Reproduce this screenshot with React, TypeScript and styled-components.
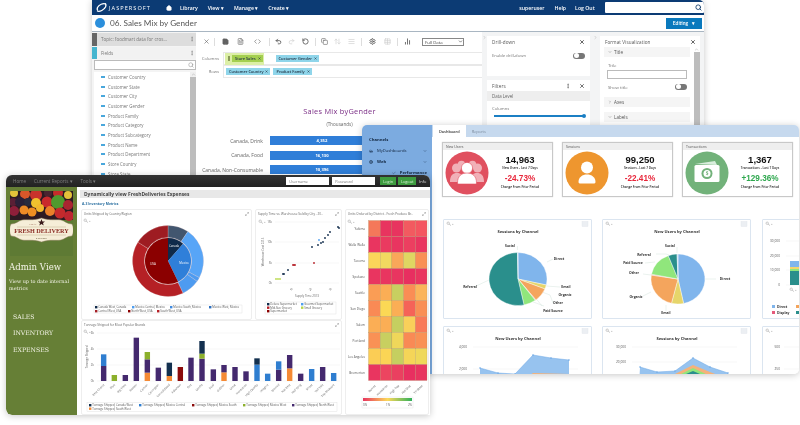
import React from 'react';
import styled, { createGlobalStyle } from 'styled-components';
import {
  X, Save, FileText, Code, Undo2, Redo2, RotateCcw, Copy, ArrowUpDown, AlignJustify,
  Settings, Table, BarChart2, Search, MoreVertical, ChevronRight, ChevronDown,
  Home, Maximize2, Globe, Car, ChevronUp, Check,
} from 'lucide-react';

const Global = createGlobalStyle`
  html, body { margin: 0; padding: 0; background: #fff; }
  body { width: 800px; height: 425px; overflow: hidden; font-family: "Open Sans", "Liberation Sans", sans-serif; }
`;

const Stage = styled.div`
  position: relative;
  width: 800px;
  height: 425px;
  overflow: hidden;
  background: #fff;
  filter: blur(0.3px);
`;

const Win = styled.div<{ $x: number; $y: number; $w: number; $h: number; $z: number; $r: string }>`
  position: absolute;
  left: ${(p) => p.$x}px;
  top: ${(p) => p.$y}px;
  width: ${(p) => p.$w}px;
  height: ${(p) => p.$h}px;
  z-index: ${(p) => p.$z};
  border-radius: ${(p) => p.$r};
  overflow: hidden;
  background: #fff;
  box-shadow: 0 1px 7px rgba(0, 0, 0, 0.22);
  display: flex;
  flex-direction: column;
`;

/* ---------- Jaspersoft window ---------- */
const TopNav = styled.div`
  height: 15px;
  flex: none;
  background: #0c3b74;
  display: flex;
  align-items: center;
  padding-left: 3px;
  color: #fff;
  font-size: 5.2px;
  font-weight: 600;
`;
const LogoText = styled.span`
  font-size: 5.6px;
  font-weight: 400;
  letter-spacing: 1.05px;
  margin: 0 15px 0 1px;
`;
const NavLink = styled.span<{ $gap?: number }>`
  margin-left: ${(p) => p.$gap ?? 0}px;
  white-space: nowrap;
`;
const NavSearch = styled.div`
  margin-left: 10px;
  width: 99px;
  height: 11px;
  background: #fff;
  border-radius: 1px;
  display: flex;
  align-items: center;
  justify-content: flex-end;
  padding-right: 2px;
  box-sizing: border-box;
  color: #17406f;
`;
const TitleBar = styled.div`
  height: 16px;
  flex: none;
  display: flex;
  align-items: center;
  padding-left: 3px;
  border-bottom: 1px solid #a9b6c2;
  color: #555;
  font-size: 8.2px;
  font-family: "Lato", sans-serif;
`;
const TitleBadge = styled.span`
  width: 10px;
  height: 10px;
  border-radius: 50%;
  background: #2b8fdc;
  margin-right: 5px;
  flex: none;
`;
const EditingBtn = styled.span`
  margin-left: auto;
  margin-right: 2px;
  width: 36px;
  height: 11px;
  background: #0a79bd;
  color: #fff;
  font-size: 5px;
  font-weight: 600;
  display: flex;
  align-items: center;
  justify-content: center;
  gap: 4px;
`;
const WorkArea = styled.div`
  flex: 1;
  display: flex;
  min-height: 0;
`;
const LeftPane = styled.div`
  width: 104px;
  flex: none;
  background: #f4f4f4;
  padding-top: 1px;
`;
const PaneHead = styled.div<{ $bg: string; $tab: string }>`
  height: 12.5px;
  background: ${(p) => p.$bg};
  border-left: 5px solid ${(p) => p.$tab};
  display: flex;
  align-items: center;
  justify-content: space-between;
  padding: 0 1px 0 4px;
  font-size: 4.6px;
  color: #777;
  margin-bottom: 1px;
`;
const FieldSearch = styled.div`
  height: 10px;
  margin: 1px 0 2px 2px;
  background: #fff;
  border: 1px solid #bbb;
  box-sizing: border-box;
  display: flex;
  align-items: center;
  justify-content: flex-end;
  padding-right: 1px;
  color: #888;
`;
const FieldArea = styled.div`
  display: flex;
  height: 130px;
  background: #fff;
  margin-left: 2px;
`;
const FieldList = styled.div`
  flex: 1;
  padding: 0 0 0 7px;
`;
const FieldRow = styled.div`
  height: 9.7px;
  display: flex;
  align-items: center;
  gap: 3px;
  font-size: 4.4px;
  color: #777;
  white-space: nowrap;
`;
const FieldIcon = styled.span`
  width: 4px;
  height: 2px;
  background: #49a7dc;
`;
const ScrollTrack = styled.div`
  width: 6px;
  background: #f0f0f0;
  color: #999;
  display: flex;
  flex-direction: column;
  align-items: center;
`;
const ScrollThumb = styled.div`
  width: 6px;
  flex: 1;
  background: #bdbdbd;
`;
const MainPane = styled.div`
  width: 286px;
  flex: none;
  background: #fff;
  padding: 1px 0 0 5px;
  box-sizing: border-box;
`;
const Toolbar = styled.div`
  height: 17px;
  display: flex;
  align-items: center;
  color: #666;
  margin-bottom: 3px;
`;
const ToolIcon = styled.span<{ $w: number; $faint?: boolean }>`
  width: ${(p) => p.$w}px;
  display: flex;
  align-items: center;
  justify-content: center;
  color: ${(p) => (p.$faint ? '#c9c9c9' : '#5f5f5f')};
`;
const ToolSep = styled.span`
  width: 1px;
  height: 8px;
  background: #ddd;
  margin: 0 3px;
`;
const DataSelect = styled.span`
  margin-left: 9px;
  width: 38px;
  height: 6px;
  border: 1px solid #888;
  font-size: 4.3px;
  line-height: 6px;
  padding-left: 2px;
  display: flex;
  justify-content: space-between;
  align-items: center;
  color: #444;
`;
const ShelfRow = styled.div`
  display: flex;
  align-items: center;
  height: 11px;
  margin-bottom: 2px;
`;
const ShelfLabel = styled.span`
  width: 22px;
  padding-right: 4px;
  box-sizing: border-box;
  text-align: right;
  font-size: 4.2px;
  color: #777;
  flex: none;
`;
const ShelfBox = styled.div`
  flex: 1;
  height: 11px;
  border: 1px solid #e8e8e8;
  border-right: none;
  display: flex;
  align-items: center;
  gap: 3px;
  padding-left: 2px;
`;
const DropZone = styled.span`
  background: #dcefa6;
  height: 12px;
  display: flex;
  align-items: center;
  gap: 2px;
  padding: 0 1px 0 3px;
  margin: 0 9px 0 -1px;
`;
const Handle = styled.span`
  width: 2px;
  height: 5px;
  background: #8a9a5a;
`;
const Pill = styled.span<{ $bg: string }>`
  background: ${(p) => p.$bg};
  height: 7px;
  padding: 0 2px 0 3px;
  font-size: 3.9px;
  color: #234;
  display: flex;
  align-items: center;
  gap: 2px;
  white-space: nowrap;
  font-weight: 600;
`;
const ChartTitle = styled.div`
  text-align: center;
  color: #7a2d85;
  font-size: 7.4px;
  letter-spacing: 0.25px;
  margin-top: 29px;
  padding-right: 4px;
`;
const ChartSub = styled.div`
  text-align: center;
  color: #666;
  font-size: 4.6px;
  margin-top: 5px;
  padding-right: 4px;
`;
const BarList = styled.div`
  margin-top: 9px;
  display: flex;
  flex-direction: column;
  gap: 5.7px;
`;
const BarRow = styled.div`
  display: flex;
  align-items: center;
  height: 9px;
`;
const BarLabel = styled.span`
  width: 62px;
  text-align: right;
  font-size: 5px;
  color: #666;
  white-space: nowrap;
  flex: none;
`;
const BarFill = styled.span`
  margin-left: 7px;
  width: 104px;
  height: 9px;
  background: #2f7ed8;
  color: #fff;
  font-size: 4.2px;
  font-weight: 700;
  display: flex;
  align-items: center;
  justify-content: center;
`;
const Strip = styled.div<{ $w: number }>`
  width: ${(p) => p.$w}px;
  flex: none;
  background: #f3f4f5;
  color: #aaa;
  display: flex;
  justify-content: center;
  padding-top: 3px;
  box-sizing: border-box;
`;
const SideCol = styled.div<{ $w: number; $end?: number }>`
  width: ${(p) => p.$w}px;
  flex: none;
  background: #f3f4f5;
  padding: 4px ${(p) => p.$end ?? 0}px 0 0;
  display: flex;
  flex-direction: column;
  gap: 4px;
  box-sizing: border-box;
`;
const SideCard = styled.div<{ $h: number }>`
  background: #fff;
  height: ${(p) => p.$h}px;
  flex: none;
  overflow: hidden;
`;
const SideHead = styled.div<{ $end?: number }>`
  height: 11px;
  padding: 0 ${(p) => p.$end ?? 5}px 0 5px;
  display: flex;
  align-items: center;
  justify-content: space-between;
  font-size: 4.6px;
  color: #555;
  letter-spacing: 0.1px;
`;
const HeadTools = styled.span`
  display: flex;
  align-items: center;
  gap: 8px;
  color: #444;
`;
const SideLine = styled.div<{ $h?: number; $top?: number }>`
  height: ${(p) => p.$h ?? 11}px;
  margin-top: ${(p) => p.$top ?? 0}px;
  padding: 0 5px;
  display: flex;
  align-items: center;
  justify-content: space-between;
  font-size: 4.2px;
  color: #777;
`;
const GreyRow = styled.div`
  height: 10px;
  background: #eeeeee;
  padding-left: 5px;
  font-size: 4.4px;
  color: #666;
  display: flex;
  align-items: center;
  gap: 2px;
  margin-bottom: 5px;
`;
const Toggle = styled.span`
  width: 12px;
  height: 6px;
  border-radius: 3px;
  background: #777;
  position: relative;
  &::after {
    content: '';
    position: absolute;
    left: 0.5px;
    top: 0.5px;
    width: 5px;
    height: 5px;
    border-radius: 50%;
    background: #fff;
  }
`;
const Slider = styled.div`
  height: 2px;
  background: #1b7fc4;
  margin: 4px 5px 0 7px;
  position: relative;
  &::after {
    content: '';
    position: absolute;
    right: -1px;
    top: -1px;
    width: 4px;
    height: 4px;
    border-radius: 50%;
    background: #1b7fc4;
  }
`;
const FormatBody = styled.div`
  display: flex;
`;
const FormatList = styled.div`
  flex: 1;
  padding-left: 4px;
`;
const FormatRow = styled.div`
  height: 10px;
  background: #f5f5f5;
  font-size: 4.6px;
  color: #555;
  display: flex;
  align-items: center;
  gap: 2px;
  padding-left: 4px;
  margin: 0 3px 5px 0;
`;
const FormatLabel = styled.div`
  font-size: 4.3px;
  color: #777;
  padding-left: 4px;
  height: 7px;
`;
const FormatInput = styled.div`
  height: 9px;
  border: 1px solid #bbb;
  box-sizing: border-box;
  margin: 1px 6px 3px 3px;
`;
const FormatToggle = styled.div`
  display: flex;
  align-items: center;
  justify-content: space-between;
  font-size: 4.3px;
  color: #777;
  padding: 0 6px 0 4px;
  height: 9px;
  margin-bottom: 6px;
`;
const FormatScroll = styled.div`
  width: 7px;
  flex: none;
  display: flex;
  flex-direction: column;
  align-items: center;
  color: #999;
  height: 90px;
`;

/* ---------- Dashboard window ---------- */
const DashBody = styled.div`
  display: flex;
  flex: 1;
  min-height: 0;
`;
const DashSide = styled.div`
  width: 70px;
  flex: none;
  background: #7cabe0;
  padding: 12px 0 0 7px;
  box-sizing: border-box;
  font-size: 4.2px;
  color: #12263f;
`;
const DashGroup = styled.div`
  font-weight: 700;
  margin-bottom: 3px;
`;
const DashItem = styled.div<{ $bold?: boolean }>`
  display: flex;
  align-items: center;
  gap: 4px;
  height: 11px;
  width: 58px;
  font-weight: ${(p) => (p.$bold ? 700 : 400)};
  svg:last-child { margin-left: auto; }
`;
const DashMain = styled.div`
  flex: 1;
  min-width: 0;
  display: flex;
  flex-direction: column;
`;
const TabBar = styled.div`
  height: 12px;
  background: #c6d9ee;
  display: flex;
  align-items: flex-end;
  flex: none;
  padding-left: 1px;
`;
const Tab = styled.span<{ $on?: boolean }>`
  height: ${(p) => (p.$on ? 12 : 11)}px;
  padding: 0 6px;
  font-size: 3.9px;
  display: flex;
  align-items: center;
  background: ${(p) => (p.$on ? '#fff' : 'transparent')};
  color: ${(p) => (p.$on ? '#333' : '#7a8a9c')};
  font-weight: ${(p) => (p.$on ? 600 : 400)};
`;
const KpiRow = styled.div`
  display: grid;
  grid-template-columns: repeat(3, 111px);
  gap: 9px;
  padding: 5px 0 0 10px;
  height: 55px;
  flex: none;
`;
const KpiCard = styled.div`
  border: 1px solid #c8c8c8;
  box-shadow: 0 0 1px rgba(0, 0, 0, 0.2);
  display: flex;
  flex-direction: column;
  box-sizing: border-box;
`;
const KpiHead = styled.div`
  height: 7px;
  background: #eeeeee;
  font-size: 3.5px;
  color: #555;
  padding-left: 3px;
  display: flex;
  align-items: center;
  flex: none;
`;
const KpiBody = styled.div`
  flex: 1;
  display: flex;
  align-items: center;
  padding-left: 2px;
`;
const KpiText = styled.div`
  flex: 1;
  text-align: center;
  padding-right: 1px;
`;
const KpiValue = styled.div`
  font-size: 9.5px;
  font-weight: 700;
  color: #111;
  line-height: 11px;
  margin-top: -2px;
  font-family: "Liberation Sans", sans-serif;
`;
const KpiNote = styled.div`
  font-size: 3.1px;
  color: #222;
  font-weight: 600;
  line-height: 6px;
  white-space: nowrap;
`;
const KpiDelta = styled.div<{ $up?: boolean }>`
  font-size: 8.2px;
  font-weight: 700;
  line-height: 10px;
  margin-top: 3px;
  color: ${(p) => (p.$up ? '#2fa84f' : '#e8263a')};
  font-family: "Liberation Sans", sans-serif;
`;
const PanelGrid = styled.div`
  display: grid;
  grid-template-columns: 149px 149px 149px;
  grid-auto-rows: 100px;
  column-gap: 10.5px;
  row-gap: 7px;
  padding: 22px 0 0 10.5px;
`;
const PanelCard = styled.div`
  border: 1px solid #dbe5f0;
  border-radius: 1px;
  box-sizing: border-box;
  background: #fff;
  svg { display: block; }
`;

/* ---------- Fresh delivery window ---------- */
const DarkBar = styled.div`
  height: 12px;
  flex: none;
  background: linear-gradient(#333, #222);
  display: flex;
  align-items: center;
  padding-left: 7px;
  font-size: 4.6px;
  color: #7f7f7f;
`;
const DarkLink = styled.span<{ $gap: number }>`
  margin-left: ${(p) => p.$gap}px;
  white-space: nowrap;
`;
const LoginField = styled.span<{ $gap: number }>`
  width: 43px;
  height: 8px;
  background: #fff;
  margin-left: ${(p) => p.$gap}px;
  font-size: 3.9px;
  color: #777;
  display: flex;
  align-items: center;
  padding-left: 3px;
  box-sizing: border-box;
`;
const LoginBtn = styled.span<{ $w: number; $gap: number }>`
  width: ${(p) => p.$w}px;
  height: 8px;
  margin-left: ${(p) => p.$gap}px;
  background: #3d9b3f;
  color: #d6efd6;
  font-size: 3.9px;
  display: flex;
  align-items: center;
  justify-content: center;
`;
const InfoLink = styled.span`
  margin-left: 3px;
  font-size: 3.9px;
  color: #ddd;
`;
const FreshBody = styled.div`
  display: flex;
  flex: 1;
  min-height: 0;
`;
const GreenSide = styled.div`
  width: 71px;
  flex: none;
  background: #667f36;
  padding: 4px 4px 0 4px;
  box-sizing: border-box;
  color: #f3f3e6;
  font-family: "DejaVu Serif", serif;
  border-bottom-left-radius: 6px;
  svg { display: block; }
`;
const AdminTitle = styled.div`
  font-size: 8.6px;
  margin: 6px 0 0 -1px;
  white-space: nowrap;
`;
const AdminNote = styled.div`
  font-size: 4.9px;
  line-height: 7.4px;
  margin: 6px 0 0 -1px;
  white-space: nowrap;
`;
const SideMenu = styled.div`
  font-size: 6.2px;
  margin: 20px 0 0 3px;
  display: flex;
  flex-direction: column;
  gap: 9px;
  line-height: 7.5px;
`;
const FreshMain = styled.div`
  flex: 1;
  min-width: 0;
  padding-top: 3px;
`;
const FreshHead = styled.div`
  height: 8px;
  margin-left: 3px;
  background: #e8e8e8;
  font-size: 4.9px;
  font-weight: 700;
  color: #444;
  padding-left: 4px;
  display: flex;
  align-items: center;
`;
const FreshSub = styled.div`
  font-size: 3.4px;
  font-weight: 700;
  color: #2a6fa0;
  padding-left: 5px;
  height: 11px;
  display: flex;
  align-items: center;
`;
const FreshGrid = styled.div`
  display: grid;
  grid-template-columns: 171px 87px 84px;
  grid-template-rows: 111px 95px;
  gap: 0 3px;
  padding-left: 4px;
`;
const FreshCard = styled.div<{ $span?: string }>`
  grid-column: ${(p) => p.$span ?? 'auto'};
  grid-row: ${(p) => (p.$span === '3' ? '1 / 3' : 'auto')};
  border: 1px solid #eeeeee;
  border-radius: 2px;
  box-sizing: border-box;
  position: relative;
  svg { display: block; }
`;
const Expand = styled.span`
  position: absolute;
  right: 2px;
  top: 2px;
  color: #777;
  display: flex;
`;

const ICON = { strokeWidth: 2 };

/* ---------- chart helpers ---------- */
const pt = (cx: number, cy: number, rx: number, ry: number, a: number) => {
  const t = (a * Math.PI) / 180;
  return [cx + rx * Math.sin(t), cy - ry * Math.cos(t)];
};
const slice = (cx: number, cy: number, rx: number, ry: number, a0: number, a1: number) => {
  const [x0, y0] = pt(cx, cy, rx, ry, a0);
  const [x1, y1] = pt(cx, cy, rx, ry, a1);
  return `M${cx} ${cy}L${x0} ${y0}A${rx} ${ry} 0 ${a1 - a0 > 180 ? 1 : 0} 1 ${x1} ${y1}Z`;
};
const ring = (cx: number, cy: number, r0: number, r1: number, a0: number, a1: number) => {
  const [x0, y0] = pt(cx, cy, r1, r1, a0);
  const [x1, y1] = pt(cx, cy, r1, r1, a1);
  const [x2, y2] = pt(cx, cy, r0, r0, a1);
  const [x3, y3] = pt(cx, cy, r0, r0, a0);
  const big = a1 - a0 > 180 ? 1 : 0;
  return `M${x0} ${y0}A${r1} ${r1} 0 ${big} 1 ${x1} ${y1}L${x2} ${y2}A${r0} ${r0} 0 ${big} 0 ${x3} ${y3}Z`;
};

const Lens = ({ x, y }: { x: number; y: number }) => (
  <g stroke="#b5b5b5" strokeWidth="0.7" fill="none">
    <circle cx={x + 1.2} cy={y + 1.2} r="1.2" />
    <path d={`M${x + 2} ${y + 2}l2 1.6M${x + 5} ${y + 2.4}h1.4`} />
  </g>
);
const Corner = ({ x }: { x: number }) => <rect x={x} y="1.5" width="6" height="5" fill="#eceff3" stroke="#e0e4ea" strokeWidth="0.4" />;
const Lbl = ({ x, y, t, a = 'middle' }: { x: number; y: number; t: string; a?: 'middle' | 'start' | 'end' }) => (
  <text x={x} y={y} fontSize="3.4" fontWeight="700" fill="#333" textAnchor={a}>{t}</text>
);

const PieOne = () => (
  <svg width="147" height="98" viewBox="0 0 147 98">
    <Lens x={3} y={2} /><Corner x={138} />
    <text x="74" y="13" fontSize="4.1" fontWeight="700" fill="#333" textAnchor="middle">Sessions by Channel</text>
    <path d="M73.400 30V26M103 42l6-3M102 66l14 1M98 72l8 3 3 8M84 80l16 6M90 76l8 10M45 60L30 67" stroke="#d5e5dc" strokeWidth="0.5" fill="none" />
    {[
      [0, 103, '#80b5ec'], [103, 112, '#e6d56a'], [112, 142, '#f4a55d'], [142, 143.5, '#ef8a8a'],
      [143.5, 168, '#90e67c'], [168, 359, '#2a8f8c'], [359, 360, '#bcd6f4'],
    ].map(([a, b, c]) => (
      <path key={String(c)} d={slice(74, 59, 29, 26.5, a as number, b as number)} fill={c as string} stroke="#fff" strokeWidth="0.4" />
    ))}
    <Lbl x={66} y={27} t="Social" /><Lbl x={115} y={40} t="Direct" /><Lbl x={122} y={68} t="Email" />
    <Lbl x={121} y={76} t="Organic" /><Lbl x={114} y={84} t="Other" /><Lbl x={109} y={92} t="Paid Source" /><Lbl x={26} y={68} t="Referral" />
  </svg>
);
const PieTwo = () => (
  <svg width="147" height="98" viewBox="0 0 147 98">
    <Lens x={3} y={2} /><Corner x={138} />
    <text x="74" y="13" fontSize="4.1" fontWeight="700" fill="#333" textAnchor="middle">New Users by Channel</text>
    <path d="M74 33V27M66 35l-3-1-10 0M52 42l-10 1M48 55l-8-1M48 72l-8 4M63 85v6M101 59h12" stroke="#d5e5dc" strokeWidth="0.5" fill="none" />
    {[
      [0, 168, '#80b5ec'], [168, 194, '#e6d56a'], [194, 279, '#f4a55d'], [279, 281, '#ef8a8a'],
      [281, 339, '#90e67c'], [339, 358, '#2a8f8c'], [358, 360, '#bcd6f4'],
    ].map(([a, b, c]) => (
      <path key={String(c)} d={slice(75, 59, 27, 25, a as number, b as number)} fill={c as string} stroke="#fff" strokeWidth="0.4" />
    ))}
    <Lbl x={67} y={27} t="Social" /><Lbl x={41} y={36} t="Referral" /><Lbl x={30} y={44} t="Paid Source" />
    <Lbl x={31} y={54} t="Other" /><Lbl x={33} y={78} t="Organic" /><Lbl x={63} y={94} t="Email" /><Lbl x={122} y={60} t="Direct" />
  </svg>
);
const StackOne = () => (
  <svg width="147" height="98" viewBox="0 0 147 98">
    <Lens x={3} y={2} />
    {[['30,000', 21], ['20,000', 36], ['10,000', 50], ['0', 65]].map(([t, y]) => (
      <g key={t}>
        <text x="17" y={(y as number) + 1} fontSize="3.2" fill="#555" textAnchor="end">{t}</text>
        <path d={`M23 ${y}H147`} stroke="#eee" strokeWidth="0.5" />
      </g>
    ))}
    <rect x="27" y="41" width="12" height="6" fill="#80b5ec" />
    <rect x="27" y="47" width="12" height="2" fill="#f4d56a" />
    <rect x="27" y="49" width="12" height="2" fill="#90e67c" />
    <rect x="27" y="51" width="12" height="14" fill="#2a8f8c" />
    <Lens x={27} y={68} />
    <rect x="9" y="85" width="3" height="3" fill="#80b5ec" /><Lbl x={14} y={88} t="Direct" a="start" />
    <rect x="9" y="91" width="3" height="3" fill="#e65a7a" /><Lbl x={14} y={94} t="Display" a="start" />
    <rect x="33" y="85" width="3" height="3" fill="#f4a55d" />
    <rect x="33" y="91" width="3" height="3" fill="#2a8f8c" />
  </svg>
);
const AreaChart = ({ title, t0, t1, mid, base, layers }: { title: string; t0: string; t1: string; mid: number; base: string; layers?: React.ReactNode }) => (
  <svg width="147" height="98" viewBox="0 0 147 98">
    <Lens x={3} y={2} /><Corner x={138} />
    <text x="74" y="12.5" fontSize="4.1" fontWeight="700" fill="#333" textAnchor="middle">{title}</text>
    <text x="23" y="21" fontSize="3.2" fill="#555" textAnchor="end">{t0}</text>
    <text x="23" y={mid + 1} fontSize="3.2" fill="#555" textAnchor="end">{t1}</text>
    <path d={`M29 20H134M29 ${mid}H134`} stroke="#eee" strokeWidth="0.5" />
    <polygon points={`${base} 125,60 36,60`} fill="#97c3ef" />
    <polyline points={base} fill="none" stroke="#6fa8e6" strokeWidth="0.5" />
    {base.split(' ').map((p) => {
      const [x, y] = p.split(',');
      return <circle key={p} cx={x} cy={y} r="0.8" fill="#6fa8e6" />;
    })}
    {layers}
  </svg>
);
const AreaThree = () => (
  <svg width="147" height="98" viewBox="0 0 147 98">
    <Lens x={3} y={2} />
    <text x="17" y="21" fontSize="3.2" fill="#555" textAnchor="end">500</text>
    <text x="17" y="43" fontSize="3.2" fill="#555" textAnchor="end">250</text>
    <path d="M21 20H147M21 42H147" stroke="#eee" strokeWidth="0.5" />
  </svg>
);

const KpiSvg = styled.svg`
  flex: none;
`;
const KpiCircle = ({ bg, children }: { bg: string; children: React.ReactNode }) => (
  <KpiSvg width="44" height="44" viewBox="0 0 44 44">
    <circle cx="22" cy="22" r="21.5" fill={bg} />
    {children}
  </KpiSvg>
);
const UsersGlyph = () => (
  <g fill="#fff">
    <g opacity="0.55">
      <circle cx="11.5" cy="17" r="4.5" /><circle cx="32.5" cy="17" r="4.5" />
      <path d="M5 31c0-7 3-9 7-9s6 2 6 9zM39 31c0-7-3-9-7-9s-6 2-6 9z" />
      <circle cx="16.5" cy="13.5" r="3.8" /><circle cx="27.5" cy="13.5" r="3.8" />
    </g>
    <circle cx="22" cy="17" r="5.6" stroke="#e0505f" strokeWidth="0.6" />
    <path d="M12.5 32c0-7 4-10 9.500-10s9.500 3 9.500 10c0 1-1 1-2 1H14.500c-1 0-2 0-2-1z" stroke="#e0505f" strokeWidth="0.6" />
  </g>
);
const PersonGlyph = () => (
  <g fill="#fff">
    <circle cx="22" cy="16.500" r="6" />
    <path d="M13.500 31c0-5 4-7.500 8.500-7.500s8.500 2.500 8.500 7.500c0 1-1 1.500-2 1.500H15.500c-1 0-2-.5-2-1.500z" />
  </g>
);
const MoneyGlyph = () => (
  <g>
    <path d="M10 13l20-3 2 4z" fill="#d9eedd" />
    <rect x="9.500" y="14" width="25" height="17" rx="1.500" fill="#fff" />
    <circle cx="22" cy="22.500" r="5.500" fill="#72b27a" />
    <circle cx="22" cy="22.500" r="3.500" fill="#fff" />
    <text x="22" y="24.300" fontSize="4.800" fontWeight="700" fill="#72b27a" textAnchor="middle">$</text>
  </g>
);

const fruit: [number, number, number, string][] = [
  [4, 2, 4, '#e3c23a'], [15, 3, 5, '#d9572a'], [26, 4, 6, '#c8332c'], [38, 2, 4, '#4a2430'], [48, 2, 5, '#c62d2a'], [58, 4, 4, '#e3c23a'],
  [3, 11, 4, '#5a1f35'], [10, 11, 5, '#2b2038'], [18, 11, 4, '#2a2a3e'], [26, 12, 5, '#f0c22e'], [37, 11, 5.500, '#c92a2c'], [48, 11, 7, '#4f9a2e'], [58, 14, 5, '#a92530'],
  [4, 20, 5, '#8e1f3a'], [14, 19, 4.500, '#ee8a26'], [22, 21, 4.500, '#ef8f22'], [30, 17, 4, '#f2b72e'], [40, 20, 5, '#e9802a'], [50, 22, 5.500, '#c42a2c'], [59, 25, 5, '#bd2630'],
];
const FreshPicture = () => (
  <svg width="63" height="65" viewBox="0 0 63 65" fontFamily="Liberation Serif, serif">
    <rect width="63" height="65" fill="#5e7a34" />
    <rect width="63" height="29" fill="#2d1a22" />
    {fruit.map(([x, y, r, c]) => <circle key={`${x}-${y}`} cx={x} cy={y} r={r} fill={c} />)}
    <path d="M1 33c5 0 7-3 11-4 5-1 10 1 19.500-2 9.500 3 14.500 1 19.500 2 4 1 6 4 11 4 2 4 2 8 0 12-5 0-7 3-11 4-5 1-10-1-19.500 2-9.500-3-14.500-1-19.500-2-4-1-6-4-11-4-2-4-2-8 0-12z" fill="#f6eed8" stroke="#8a7a5a" strokeWidth="0.5" />
    <path d="M7 36h49M7 44h49" stroke="#a08c62" strokeWidth="0.3" />
    <polygon points="31.500,28 32.400,30.500 35,30.500 33,32 33.700,34.500 31.500,33 29.300,34.500 30,32 28,30.500 30.600,30.500" fill="#3a1a1a" />
    <text x="23" y="34" fontSize="2.200" fill="#7a3a2a" textAnchor="middle">LOCAL</text>
    <text x="31.500" y="42.300" fontSize="6.200" fontWeight="700" fill="#8a2a22" textAnchor="middle">FRESH DELIVERY</text>
    <text x="31.500" y="47.800" fontSize="2.600" fontWeight="700" fill="#5a4a2a" textAnchor="middle" letterSpacing="0.5">FOODS</text>
  </svg>
);

const Legend = ({ x, y, w, h, rows }: { x: number; y: number; w: number; h: number; rows: [number, number, string, string][] }) => (
  <g>
    <rect x={x} y={y} width={w} height={h} fill="#fff" stroke="#ddd" strokeWidth="0.4" />
    {rows.map(([ix, iy, c, t]) => (
      <g key={t}>
        <rect x={ix} y={iy} width="2.400" height="2.400" fill={c} />
        <text x={ix + 3.300} y={iy + 2.200} fontSize="2.750" fill="#555">{t}</text>
      </g>
    ))}
  </g>
);

const DonutCard = () => {
  const inner: [number, number, string][] = [[0, 41, '#0f2a4a'], [41, 154, '#2f7fd9'], [154, 360, '#8b0000']];
  const outer: [number, number, string][] = [[0, 34, '#42566f'], [34, 118, '#57a5f7'], [118, 125, '#4e9bf0'], [125, 155, '#4e9bf0'], [155, 302, '#b52025'], [302, 360, '#9e1c22']];
  return (
    <svg width="169" height="109" viewBox="0 0 169 109">
      <text x="2" y="5" fontSize="3.100" fill="#666">Units Shipped by Country/Region</text>
      <Lens x={2} y={9} />
      <circle cx="86" cy="51" r="35.500" fill="#e9d8d8" />
      {outer.map(([a, b, c]) => <path key={a} d={ring(86, 51, 23.600, 35.500, a, b)} fill={c} stroke="#ead6d6" strokeWidth="0.25" />)}
      {inner.map(([a, b, c]) => <path key={a} d={ring(86, 51, 0, 23, a, b)} fill={c} />)}
      <text x="92" y="37" fontSize="2.900" fill="#fff" textAnchor="middle">Canada</text>
      <text x="102" y="54" fontSize="2.900" fill="#fff" textAnchor="middle">Mexico</text>
      <text x="71" y="55" fontSize="2.900" fill="#fff" textAnchor="middle">USA</text>
      <Legend x={12} y={95} w={148} h={8} rows={[
        [13, 96, '#0f2a4a', 'Canada West, Canada'], [50, 96, '#4e9ef0', 'Mexico Central, Mexico'], [88, 96, '#3f8ae0', 'Mexico South, Mexico'], [127, 96, '#2c6fc0', 'Mexico West, Mexico'],
        [13, 100, '#a51f26', 'Central West, USA'], [46, 100, '#8b0000', 'North West, USA'], [75, 100, '#b51f26', 'South West, USA'],
      ]} />
    </svg>
  );
};

const ScatterCard = () => {
  const dots: [number, number, string][] = [
    [82, 17, '#0f2a4a'], [83, 18, '#0f2a4a'], [74, 22, '#0f2a4a'], [72, 25, '#0f2a4a'], [69, 28, '#0f2a4a'], [67, 32, '#0f2a4a'], [65, 33, '#0f2a4a'], [62, 35, '#0f2a4a'], [56, 37, '#0f2a4a'],
    [27, 64, '#0f2a4a'], [28, 64, '#0f2a4a'], [32, 60, '#0f2a4a'], [63, 30, '#4e9ef0'], [37, 55, '#b51f26'], [38, 55, '#b51f26'], [39, 55, '#b51f26'], [58, 53, '#b51f26'],
    [20, 69, '#b8d84a'], [22, 69, '#b8d84a'], [24, 69, '#b8d84a'],
  ];
  return (
    <svg width="85" height="109" viewBox="0 0 85 109">
      <text x="2" y="5" fontSize="3.100" fill="#666">Supply Time vs. Warehouse Sold by City - 20..</text>
      <Lens x={3} y={10} />
      {[[12, '15k'], [32, '10k'], [53, '5k'], [73, '0k']].map(([y, t]) => (
        <g key={t as string}>
          <text x="16" y={(y as number) + 1} fontSize="2.900" fill="#666" textAnchor="end">{t}</text>
          <path d={`M19 ${y}H83`} stroke="#ececec" strokeWidth="0.5" />
        </g>
      ))}
      <text transform="translate(8 42) rotate(-90)" fontSize="2.800" fill="#666" textAnchor="middle">Warehouse Cost 2013</text>
      {[[36, '1k'], [55, '2k'], [75, '3k']].map(([x, t]) => (
        <text key={t as string} transform={`translate(${x} 80) rotate(-45)`} fontSize="2.900" fill="#666" textAnchor="middle">{t}</text>
      ))}
      <text x="51" y="87" fontSize="2.900" fill="#666" textAnchor="middle">Supply Time 2013</text>
      {dots.map(([x, y, c], i) => <circle key={i} cx={x} cy={y} r="0.9" fill={c} />)}
      <Legend x={9} y={92} w={71} h={12} rows={[
        [11, 93, '#0f2a4a', 'Deluxe Supermarket'], [45, 93, '#4e9ef0', 'Gourmet Supermarket'],
        [11, 96.500, '#b51f26', 'Mid-Size Grocery'], [45, 96.500, '#b8d84a', 'Small Grocery'],
        [11, 100, '#8b0000', 'Supermarket'],
      ]} />
    </svg>
  );
};

const heat = [
  ['#f4785a', '#e8345f', '#e8345f', '#f25a60', '#f45560'],
  ['#e93560', '#ea3a60', '#e93560', '#ec3f60', '#e93560'],
  ['#fbd55a', '#f1d860', '#f9a75a', '#dfd662', '#f98f55'],
  ['#e93560', '#e93560', '#e93560', '#e82f60', '#e93560'],
  ['#fa9d55', '#fbae55', '#c8cf60', '#fa8d55', '#fbb45a'],
  ['#f98a55', '#fbd855', '#fbae55', '#f56358', '#f98f55'],
  ['#fbae55', '#fbae55', '#c5cf60', '#f9d05a', '#f87a58'],
  ['#f99155', '#c8cf60', '#efd75a', '#f98a55', '#f99155'],
  ['#fbcd55', '#fbd555', '#c5cf60', '#f5d558', '#efd85a'],
  ['#e93560', '#ec4560', '#ea4060', '#e83060', '#e83560'],
];
const cities = ['Yakima', 'Walla Walla', 'Tacoma', 'Spokane', 'Seattle', 'San Diego', 'Salem', 'Portland', 'Los Angeles', 'Bremerton'];
const HeatCard = () => (
  <svg width="82" height="204" viewBox="0 0 82 204">
    <defs>
      <linearGradient id="heatScale">
        <stop offset="0" stopColor="#e8345f" /><stop offset="0.5" stopColor="#fbd85a" /><stop offset="1" stopColor="#2fb05a" />
      </linearGradient>
    </defs>
    <text x="2" y="5" fontSize="3.100" fill="#666">Units Ordered by District - Fresh Produce Br..</text>
    <Lens x={2} y={10} />
    {heat.map((row, r) => row.map((c, i) => (
      <rect key={`${r}-${i}`} x={22.500 + i * 11.700} y={10.500 + r * 16} width="11.700" height="16" fill={c} stroke="#a88a55" strokeWidth="0.25" />
    )))}
    {cities.map((t, r) => (
      <text key={t} x="19" y={19.500 + r * 16} fontSize="3.100" fill="#555" textAnchor="end">{t}</text>
    ))}
    {['Burnet', 'Hermanos', 'High Top', 'Hot Shot', 'Tri-State'].map((t, i) => (
      <text key={t} transform={`translate(${30 + i * 11.700} 176) rotate(-45)`} fontSize="2.900" fill="#555" textAnchor="end">{t}</text>
    ))}
    <rect x="16" y="187" width="51" height="11" fill="#fff" stroke="#e2e2e2" strokeWidth="0.4" />
    <rect x="17" y="188" width="49" height="3" fill="url(#heatScale)" />
    <text x="17" y="196" fontSize="2.900" fill="#555">0%</text>
    <text x="40" y="196" fontSize="2.900" fill="#555">1%</text>
    <text x="66" y="196" fontSize="2.900" fill="#555" textAnchor="end">2%</text>
  </svg>
);

const PU = '#44296e';
const OR = '#f58a35';
const NV = '#13304f';
const GR = '#8cb02c';
const BL = '#2f7ed0';
const DR = '#8b0a0a';
const stacks: [number, [number, number, string][]][] = [
  [308, [[195, 240, PU], [160, 195, BL]]], [340, [[222, 240, GR]]], [373, [[222, 240, PU]]], [406, [[110, 240, PU]]],
  [439, [[215, 240, OR], [175, 215, PU], [153, 175, GR]]], [472, [[200, 240, PU]]], [505, [[225, 240, OR], [185, 225, NV]]], [538, [[198, 240, DR]]],
  [570, [[170, 240, PU]]], [603, [[173, 240, PU], [158, 173, GR], [120, 158, NV]]], [637, [[205, 240, PU]]], [669, [[214, 240, OR], [192, 214, PU]]],
  [702, [[198, 240, PU]]], [735, [[211, 240, PU]]], [768, [[191, 240, BL], [172, 191, NV]]], [800, [[218, 240, BL]]],
  [833, [[206, 240, PU], [181, 206, BL]]], [866, [[202, 240, OR], [162, 202, PU]]], [899, [[218, 240, PU]]], [932, [[204, 240, BL]]],
  [965, [[198, 240, PU]]], [998, [[216, 240, BL]]],
];
const brands = ['Best Choice', 'Blue', 'Big Time', 'Booker', 'Carlson', 'Carrington', 'Consolidated', 'Fabulous', 'Fort', 'Gorilla', 'Dual', 'Golden', 'Great', 'Hermanos', 'High Quality', 'Imagine', 'Merced', 'Nat Best', 'Red Wing', 'Shoot', 'Tell Tale', 'Top Measure'];
const StackCard = () => (
  <svg width="259" height="93" viewBox="0 0 259 93">
    <text x="2" y="5" fontSize="3.100" fill="#666">Tonnage Shipped for Most Popular Brands</text>
    <Lens x={2} y={9} />
    {[[12, '6k'], [28, '4k'], [44, '2k'], [60, '0k']].map(([y, t]) => (
      <g key={t as string}>
        <text x="12" y={(y as number) + 1} fontSize="2.900" fill="#666" textAnchor="end">{t}</text>
        <path d={`M15 ${y}H258`} stroke="#ececec" strokeWidth="0.5" />
      </g>
    ))}
    <text transform="translate(6 36) rotate(-90)" fontSize="2.800" fill="#666" textAnchor="middle">Tonnage Shipped</text>
    {stacks.map(([zx, parts]) => parts.map(([top, bot, c]) => (
      <rect key={`${zx}-${top}`} x={zx / 3 - 81 - 2.700} y={top / 3 - 20} width="5.400" height={(bot - top) / 3} fill={c} />
    )))}
    {stacks.map(([zx], i) => (
      <text key={zx} transform={`translate(${zx / 3 - 80} 64) rotate(-45)`} fontSize="2.900" fill="#666" textAnchor="end">{brands[i]}</text>
    ))}
    <Legend x={5} y={81.500} w={250} h={9} rows={[
      [7, 83, NV, 'Tonnage Shipped, Canada West'], [57, 83, BL, 'Tonnage Shipped, Mexico Central'], [110, 83, DR, 'Tonnage Shipped, Mexico South'],
      [161, 83, GR, 'Tonnage Shipped, Mexico West'], [210, 83, PU, 'Tonnage Shipped, North West'], [7, 86.500, OR, 'Tonnage Shipped, South West'],
    ]} />
  </svg>
);

const fields = ['Customer Country', 'Customer State', 'Customer City', 'Customer Gender', 'Product Family', 'Product Category', 'Product Subcategory', 'Product Name', 'Product Department', 'Store Country', 'Store State'];
const barRows = [['Canada, Drink', '4,352'], ['Canada, Food', '16,130'], ['Canada, Non-Consumable', '10,396']];

const JasperLogo = () => (
  <svg width="13" height="11" viewBox="0 0 13 11" fill="none" stroke="#fff" strokeWidth="1.300">
    <path d="M2 9c3 1 7-1 8.500-4 .6-1.500.5-3-.5-3.500" />
    <path d="M11 2C8 1 4 2.500 2.500 5.500 2 7 2 8 3 8.500" />
  </svg>
);

export default function App() {
  return (
    <Stage>
      <Global />
      <Win $x={92} $y={0} $w={612} $h={180} $z={1} $r="0 5px 0 0">
        <TopNav>
          <JasperLogo />
          <LogoText>JASPERSOFT</LogoText>
          <Home size={6} fill="#fff" {...ICON} />
          <NavLink $gap={8}>Library</NavLink>
          <NavLink $gap={10}>View ▾</NavLink>
          <NavLink $gap={10}>Manage ▾</NavLink>
          <NavLink $gap={10}>Create ▾</NavLink>
          <NavLink $gap={230}>superuser</NavLink>
          <NavLink $gap={10}>Help</NavLink>
          <NavLink $gap={9}>Log Out</NavLink>
          <NavSearch><Search size={7} strokeWidth={3} /></NavSearch>
        </TopNav>
        <TitleBar>
          <TitleBadge />
          06. Sales Mix by Gender
          <EditingBtn>Editing <span>▾</span></EditingBtn>
        </TitleBar>
        <WorkArea>
          <LeftPane>
            <PaneHead $bg="#dddddd" $tab="#666">Topic: foodmart data for cros... <MoreVertical size={6} /></PaneHead>
            <PaneHead $bg="#f2f2f2" $tab="#45b5cf">Fields <MoreVertical size={6} /></PaneHead>
            <FieldSearch><Search size={6} /></FieldSearch>
            <FieldArea>
              <FieldList>
                {fields.map((f) => (
                  <FieldRow key={f}><FieldIcon />{f}</FieldRow>
                ))}
              </FieldList>
              <ScrollTrack>
                <ChevronUp size={5} />
                <ScrollThumb />
              </ScrollTrack>
            </FieldArea>
          </LeftPane>
          <MainPane>
            <Toolbar>
              <ToolIcon $w={10}><X size={7} /></ToolIcon>
              <ToolSep />
              <ToolIcon $w={14}><Save size={7} fill="#666" /></ToolIcon>
              <ToolIcon $w={16}><FileText size={7} /></ToolIcon>
              <ToolIcon $w={18}><Code size={7} /></ToolIcon>
              <ToolSep />
              <ToolIcon $w={11}><Undo2 size={7} strokeWidth={3} /></ToolIcon>
              <ToolIcon $w={14} $faint><Redo2 size={7} /></ToolIcon>
              <ToolIcon $w={14}><RotateCcw size={7} strokeWidth={3} /></ToolIcon>
              <ToolSep />
              <ToolIcon $w={11}><Copy size={7} /></ToolIcon>
              <ToolIcon $w={14} $faint><ArrowUpDown size={7} /></ToolIcon>
              <ToolIcon $w={14} $faint><AlignJustify size={7} /></ToolIcon>
              <ToolSep />
              <ToolIcon $w={15}><Settings size={7} strokeWidth={3} /></ToolIcon>
              <ToolIcon $w={14} $faint><Table size={7} /></ToolIcon>
              <ToolSep />
              <ToolIcon $w={12}><BarChart2 size={7} strokeWidth={3} /></ToolIcon>
              <DataSelect>Full Data <ChevronDown size={5} strokeWidth={3} /></DataSelect>
            </Toolbar>
            <ShelfRow>
              <ShelfLabel>Columns</ShelfLabel>
              <ShelfBox>
                <DropZone><Handle /><Pill $bg="#a4cf50">Store Sales <X size={3} strokeWidth={4} /></Pill></DropZone>
                <Pill $bg="#8fd5ea">Customer Gender <X size={3} strokeWidth={4} /></Pill>
              </ShelfBox>
            </ShelfRow>
            <ShelfRow>
              <ShelfLabel>Rows</ShelfLabel>
              <ShelfBox>
                <Pill $bg="#8fd5ea">Customer Country <X size={3} strokeWidth={4} /></Pill>
                <Pill $bg="#8fd5ea">Product Family <X size={3} strokeWidth={4} /></Pill>
              </ShelfBox>
            </ShelfRow>
            <ChartTitle>Sales Mix byGender</ChartTitle>
            <ChartSub>(Thousands)</ChartSub>
            <BarList>
              {barRows.map(([l, v]) => (
                <BarRow key={l}><BarLabel>{l}</BarLabel><BarFill>{v}</BarFill></BarRow>
              ))}
            </BarList>
          </MainPane>
          <Strip $w={5}><ChevronRight size={5} /></Strip>
          <SideCol $w={103}>
            <SideCard $h={40}>
              <SideHead>Drill-down <X size={6} strokeWidth={3} color="#333" /></SideHead>
              <SideLine $top={3}>Enable drill-down <Toggle /></SideLine>
            </SideCard>
            <SideCard $h={60}>
              <SideHead>Filters <HeadTools><MoreVertical size={6} /><X size={6} strokeWidth={3} /></HeadTools></SideHead>
              <GreyRow>Data Level</GreyRow>
              <SideLine $h={5}>Columns</SideLine>
              <Slider />
            </SideCard>
          </SideCol>
          <Strip $w={10}><ChevronRight size={5} /></Strip>
          <SideCol $w={104} $end={4}>
            <SideCard $h={120}>
              <SideHead $end={4}>Format Visualization <X size={6} strokeWidth={3} color="#333" /></SideHead>
              <FormatBody>
                <FormatList>
                  <FormatRow><ChevronDown size={4} />Title</FormatRow>
                  <FormatLabel>Title</FormatLabel>
                  <FormatInput />
                  <FormatToggle>Show title <Toggle /></FormatToggle>
                  <FormatRow><ChevronRight size={4} />Axes</FormatRow>
                  <FormatRow><ChevronDown size={4} />Labels</FormatRow>
                </FormatList>
                <FormatScroll>
                  <ChevronUp size={5} />
                  <ScrollThumb />
                </FormatScroll>
              </FormatBody>
            </SideCard>
          </SideCol>
        </WorkArea>
      </Win>

      <Win $x={362} $y={125} $w={437} $h={249} $z={2} $r="5px">
        <DashBody>
          <DashSide>
            <DashGroup>Channels</DashGroup>
            <DashItem><Car size={4} />MyDashboards<ChevronDown size={4} /></DashItem>
            <DashItem $bold><Globe size={4} />Web<ChevronDown size={4} /></DashItem>
            <DashItem $bold><Check size={4} />Performance</DashItem>
          </DashSide>
          <DashMain>
            <TabBar>
              <Tab $on>Dashboard</Tab>
              <Tab>Reports</Tab>
            </TabBar>
            <KpiRow>
              <KpiCard>
                <KpiHead>New Users</KpiHead>
                <KpiBody>
                  <KpiCircle bg="#e0505f"><UsersGlyph /></KpiCircle>
                  <KpiText>
                    <KpiValue>14,963</KpiValue>
                    <KpiNote>New Users - Last 7 Days</KpiNote>
                    <KpiDelta>-24.73%</KpiDelta>
                    <KpiNote>Change From Prior Period</KpiNote>
                  </KpiText>
                </KpiBody>
              </KpiCard>
              <KpiCard>
                <KpiHead>Sessions</KpiHead>
                <KpiBody>
                  <KpiCircle bg="#ee962f"><PersonGlyph /></KpiCircle>
                  <KpiText>
                    <KpiValue>99,250</KpiValue>
                    <KpiNote>Sessions - Last 7 Days</KpiNote>
                    <KpiDelta>-22.41%</KpiDelta>
                    <KpiNote>Change From Prior Period</KpiNote>
                  </KpiText>
                </KpiBody>
              </KpiCard>
              <KpiCard>
                <KpiHead>Transactions</KpiHead>
                <KpiBody>
                  <KpiCircle bg="#72b27a"><MoneyGlyph /></KpiCircle>
                  <KpiText>
                    <KpiValue>1,367</KpiValue>
                    <KpiNote>Transactions - Last 7 Days</KpiNote>
                    <KpiDelta $up>+129.36%</KpiDelta>
                    <KpiNote>Change From Prior Period</KpiNote>
                  </KpiText>
                </KpiBody>
              </KpiCard>
            </KpiRow>
            <PanelGrid>
              <PanelCard><PieOne /></PanelCard>
              <PanelCard><PieTwo /></PanelCard>
              <PanelCard><StackOne /></PanelCard>
              <PanelCard>
                <AreaChart title="New Users by Channel" t0="4,000" t1="2,000" mid={42} base="36,41 54,46 71,47 89,28 107,31 125,33"
                  layers={<polygon points="71,60 89,46 125,47 125,60" fill="#f4b27a" />} />
              </PanelCard>
              <PanelCard>
                <AreaChart title="Sessions by Channel" t0="30,000" t1="20,000" mid={35} base="37,40 54,45 72,44 90,31 107,40 125,46"
                  layers={(
                    <g>
                      <polygon points="37,47 54,49 72,47 90,38 107,45 125,52 125,60 37,60" fill="#f4b27a" />
                      <polygon points="54,53 72,50 90,41 107,49 125,56 125,60 54,60" fill="#90e67c" />
                      <polygon points="76,50 90,44 104,50" fill="#2a8f8c" />
                    </g>
                  )} />
              </PanelCard>
              <PanelCard><AreaThree /></PanelCard>
            </PanelGrid>
          </DashMain>
        </DashBody>
      </Win>

      <Win $x={6} $y={175} $w={424} $h={240} $z={3} $r="6px 6px 0 6px">
        <DarkBar>
          <DarkLink $gap={0}>Home</DarkLink>
          <DarkLink $gap={8}>Current Reports ▾</DarkLink>
          <DarkLink $gap={8}>Tools ▾</DarkLink>
          <LoginField $gap={190}>Username</LoginField>
          <LoginField $gap={3}>Password</LoginField>
          <LoginBtn $w={16} $gap={5}>Login</LoginBtn>
          <LoginBtn $w={18} $gap={2}>Logout</LoginBtn>
          <InfoLink>Info</InfoLink>
        </DarkBar>
        <FreshBody>
          <GreenSide>
            <FreshPicture />
            <AdminTitle>Admin View</AdminTitle>
            <AdminNote>View up to date internal<br />metrics</AdminNote>
            <SideMenu>
              <span>SALES</span>
              <span>INVENTORY</span>
              <span>EXPENSES</span>
            </SideMenu>
          </GreenSide>
          <FreshMain>
            <FreshHead>Dynamically view FreshDeliveries Expenses</FreshHead>
            <FreshSub>A-3 Inventory Metrics</FreshSub>
            <FreshGrid>
              <FreshCard><DonutCard /><Expand><Maximize2 size={4} /></Expand></FreshCard>
              <FreshCard><ScatterCard /><Expand><Maximize2 size={4} /></Expand></FreshCard>
              <FreshCard $span="3"><HeatCard /><Expand><Maximize2 size={4} /></Expand></FreshCard>
              <FreshCard $span="1 / 3"><StackCard /><Expand><Maximize2 size={4} /></Expand></FreshCard>
            </FreshGrid>
          </FreshMain>
        </FreshBody>
      </Win>
    </Stage>
  );
}
